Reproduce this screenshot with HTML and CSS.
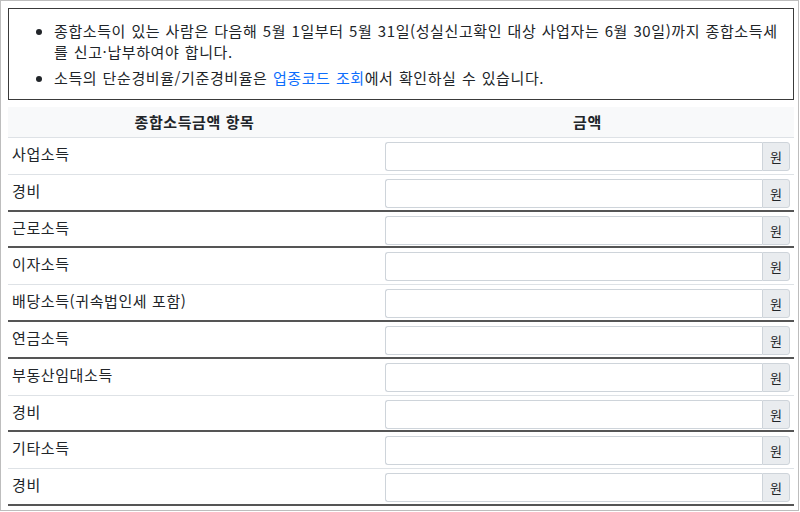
FILE: index.html
```html
<!DOCTYPE html>
<html lang="ko">
<head>
<meta charset="utf-8">
<link rel="stylesheet" href="styles.css">
</head>
<body>
<div class="frame">
  <div class="notice">
    <ul class="notice-list">
      <li>종합소득이 있는 사람은 다음해 5월 1일부터 5월 31일(성실신고확인 대상 사업자는 6월 30일)까지 종합소득세를 신고·납부하여야 합니다.</li>
      <li>소득의 단순경비율/기준경비율은 <a class="link" href="#">업종코드 조회</a>에서 확인하실 수 있습니다.</li>
    </ul>
  </div>
  <div class="sheet">
    <div class="row head">
      <div class="th">종합소득금액 항목</div>
      <div class="th">금액</div>
    </div>
    <div class="row"><div class="label">사업소득</div><div class="amount"><div class="input-group"><input class="field" type="text"><span class="unit">원</span></div></div></div>
    <div class="row end"><div class="label">경비</div><div class="amount"><div class="input-group"><input class="field" type="text"><span class="unit">원</span></div></div></div>
    <div class="row end"><div class="label">근로소득</div><div class="amount"><div class="input-group"><input class="field" type="text"><span class="unit">원</span></div></div></div>
    <div class="row"><div class="label">이자소득</div><div class="amount"><div class="input-group"><input class="field" type="text"><span class="unit">원</span></div></div></div>
    <div class="row end"><div class="label">배당소득(귀속법인세 포함)</div><div class="amount"><div class="input-group"><input class="field" type="text"><span class="unit">원</span></div></div></div>
    <div class="row end"><div class="label">연금소득</div><div class="amount"><div class="input-group"><input class="field" type="text"><span class="unit">원</span></div></div></div>
    <div class="row"><div class="label">부동산임대소득</div><div class="amount"><div class="input-group"><input class="field" type="text"><span class="unit">원</span></div></div></div>
    <div class="row end"><div class="label">경비</div><div class="amount"><div class="input-group"><input class="field" type="text"><span class="unit">원</span></div></div></div>
    <div class="row"><div class="label">기타소득</div><div class="amount"><div class="input-group"><input class="field" type="text"><span class="unit">원</span></div></div></div>
    <div class="row end"><div class="label">경비</div><div class="amount"><div class="input-group"><input class="field" type="text"><span class="unit">원</span></div></div></div>
  </div>
</div>
</body>
</html>
```
FILE: styles.css
```css
* { box-sizing: border-box; }
html, body { margin: 0; padding: 0; background: #fff; }
body {
  font-family: "Noto Sans CJK KR", "Noto Sans", sans-serif;
  font-size: 15px;
  letter-spacing: 0.6px;
  color: #212529;
}
.frame {
  width: 799px;
  height: 511px;
  border: 1px solid #bdbdbd;
  padding: 7px 4px 0 7px;
  overflow: hidden;
}
.notice {
  border: 1px solid #3a3a3a;
  padding: 11px 8px 11px 0;
}
.notice-list {
  margin: 0;
  padding: 0 0 0 45px;
  line-height: 21px;
  word-spacing: 0.6px;
}
.notice-list li + li { margin-top: 5px; }
.link { color: #0d6efd; text-decoration: none; }
.sheet { margin-top: 7px; }
.row {
  display: grid;
  grid-template-columns: 373px 1fr;
  height: 36.8px;
  border-bottom: 1px solid #dee2e6;
}
.row.end { border-bottom: 2px solid #555; }
.row.head {
  height: 31px;
  background: #f8f9fa;
  border-bottom: 1px solid #dee2e6;
}
.th {
  font-weight: bold;
  text-align: center;
  line-height: 30px;
}
.label {
  padding: 5px 4px 0 4px;
  line-height: 21px;
}
.amount { padding: 4px 4px 0 4px; }
.input-group {
  display: flex;
  height: 29px;
}
.field {
  flex: 1;
  min-width: 0;
  margin: 0;
  border: 1px solid #ced4da;
  border-right: 0;
  border-radius: 3px 0 0 3px;
  background: #fff;
  font: inherit;
  padding: 0 8px;
}
.unit {
  width: 28px;
  display: flex;
  align-items: center;
  justify-content: center;
  background: #e9ecef;
  border: 1px solid #ced4da;
  border-radius: 0 3px 3px 0;
  font-size: 13px;
  letter-spacing: 0;
}
```
